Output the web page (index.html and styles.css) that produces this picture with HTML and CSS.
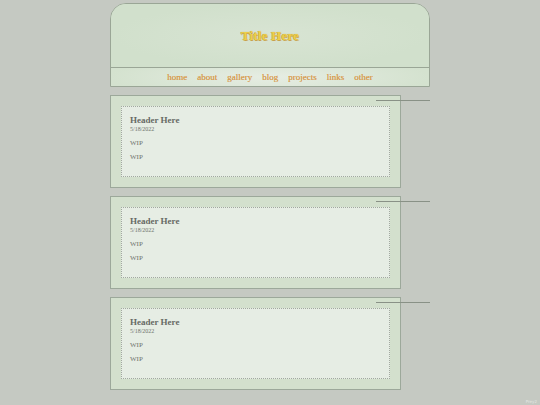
FILE: index.html
```html
<!DOCTYPE html>
<html>
<head>
<meta charset="utf-8">
<link rel="stylesheet" href="styles.css">
</head>
<body>
<div class="page">
  <header class="masthead">
    <div class="title-area"><h1 class="site-title">Title Here</h1></div>
    <nav class="nav">
      <a href="#">home</a>
      <a href="#">about</a>
      <a href="#">gallery</a>
      <a href="#">blog</a>
      <a href="#">projects</a>
      <a href="#">links</a>
      <a href="#">other</a>
    </nav>
  </header>

  <main class="posts">
    <article class="post">
      <span class="post-rule"></span>
      <div class="post-body">
        <h2 class="post-title">Header Here</h2>
        <div class="post-date">5/18/2022</div>
        <p class="post-text">WIP</p>
        <p class="post-text">WIP</p>
      </div>
    </article>
    <article class="post">
      <span class="post-rule"></span>
      <div class="post-body">
        <h2 class="post-title">Header Here</h2>
        <div class="post-date">5/18/2022</div>
        <p class="post-text">WIP</p>
        <p class="post-text">WIP</p>
      </div>
    </article>
    <article class="post">
      <span class="post-rule"></span>
      <div class="post-body">
        <h2 class="post-title">Header Here</h2>
        <div class="post-date">5/18/2022</div>
        <p class="post-text">WIP</p>
        <p class="post-text">WIP</p>
      </div>
    </article>
  </main>
</div>
<div class="credit">Prey2</div>
</body>
</html>
```

FILE: styles.css
```css
html, body {
  margin: 0;
  padding: 0;
}

body {
  background: #c5c9c2;
  font-family: "Liberation Serif", "DejaVu Serif", serif;
  width: 540px;
  height: 405px;
  overflow: hidden;
  position: relative;
}

.page {
  width: 320px;
  margin-left: 110px;
  padding-top: 3px;
}

/* top banner */
.masthead {
  border: 1px solid #9aa696;
  border-radius: 16px 16px 0 0;
  overflow: hidden;
  background: #d1e0cc;
}

.title-area {
  height: 63px;
  display: flex;
  align-items: center;
  justify-content: center;
  background: radial-gradient(ellipse at center, #d8e4d3 0%, #d1e0cc 70%);
}

.site-title {
  margin: 0;
  font-size: 13px;
  font-weight: bold;
  color: #ecd048;
  text-shadow:
    0 0 1px #c9a24a,
    0.5px 0.5px 0 #c9a24a,
    -0.5px -0.5px 0 #c9a24a;
  letter-spacing: 0.2px;
}

.nav {
  height: 18px;
  border-top: 1px solid #9aa696;
  display: flex;
  align-items: center;
  justify-content: center;
  gap: 10px;
  background: radial-gradient(ellipse 50% 120% at center, #e6ede3 0%, #d4e2cf 100%);
}

.nav a {
  color: #d89f55;
  text-decoration: none;
  font-size: 9px;
  text-shadow: 0 0 0.4px #d89f55;
}

/* posts */
.posts {
  margin-top: 8px;
  display: flex;
  flex-direction: column;
  gap: 8px;
}

.post {
  position: relative;
  width: 269px;
  height: 71px;
  padding: 10px;
  border: 1px solid #9ca89a;
  background: #d3e0cd;
}

.post-rule {
  position: absolute;
  top: 4px;
  left: 265px;
  width: 54px;
  height: 1px;
  background: #899186;
}

.post-body {
  height: 100%;
  box-sizing: border-box;
  border: 1px dotted #a2a9a0;
  background: #e6ede4;
  padding: 8px 8px;
  color: #6a6d68;
}

.post-title {
  margin: 0;
  font-size: 9px;
  font-weight: bold;
  line-height: 11px;
  color: #666a65;
}

.post-date {
  font-size: 6px;
  line-height: 7px;
  color: #6f736d;
}

.post-text {
  margin: 7px 0 0;
  font-size: 7px;
  line-height: 7px;
  color: #6f736d;
}

.credit {
  position: absolute;
  right: 3px;
  bottom: 1px;
  font-size: 4px;
  color: #e4e7e2;
  font-family: "DejaVu Sans", sans-serif;
}
```
